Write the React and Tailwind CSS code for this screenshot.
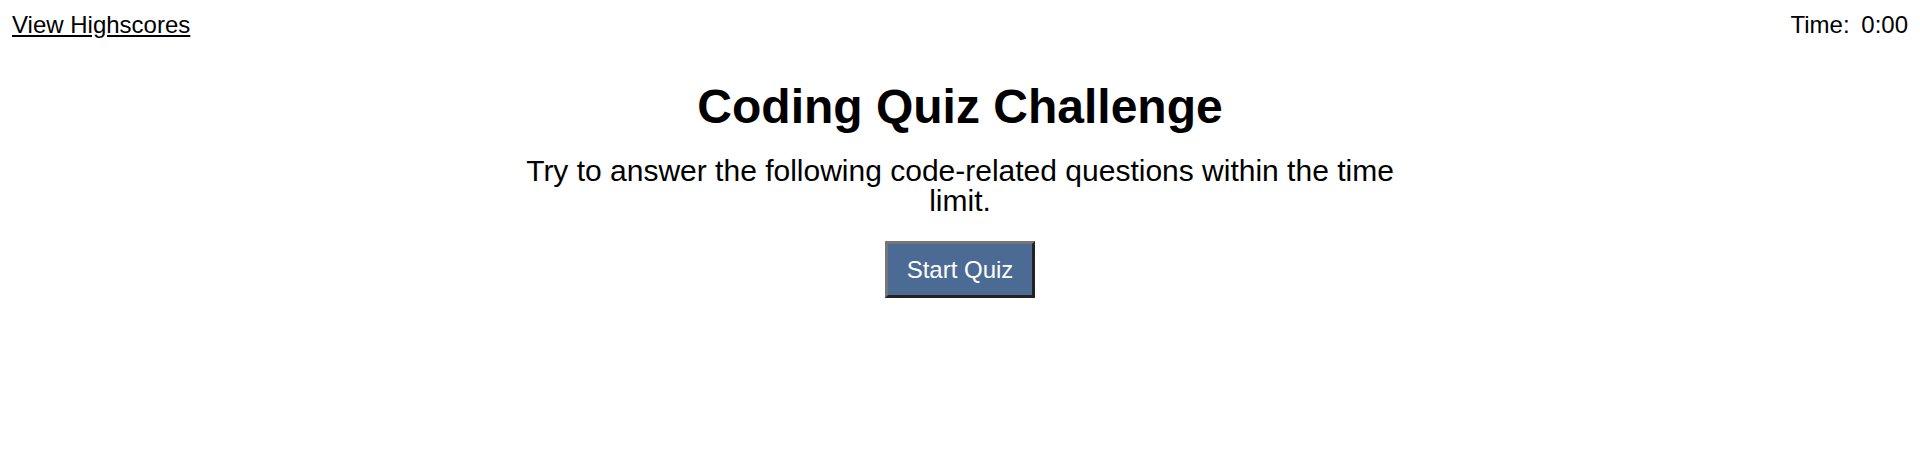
import React from 'react';

export default function App() {
  return (
    <div className="min-h-screen bg-white text-black font-['Liberation_Sans',Arial,sans-serif]">
      {/* Header */}
      <header className="flex justify-between items-start px-3 pt-[11px] text-[24px] leading-[1.15]">
        <a href="#" className="underline text-black">View Highscores</a>
        <div>
          Time: <span className="ml-[5px]">0:00</span>
        </div>
      </header>

      {/* Intro */}
      <main className="flex flex-col items-center text-center">
        <h1 className="mt-[40px] text-[48px] font-bold leading-[1.15]">Coding Quiz Challenge</h1>
        <p className="mt-[22px] w-[900px] text-[30px] leading-[30px]">
          Try to answer the following code-related questions within the time limit.
        </p>
        <button className="mt-[25px] px-[19px] py-[12px] text-[24px] leading-[1.15] text-white bg-[#4b6b95] border-[3px] border-t-[#767676] border-l-[#767676] border-b-[#222222] border-r-[#222222]">
          Start Quiz
        </button>
      </main>
    </div>
  );
}
